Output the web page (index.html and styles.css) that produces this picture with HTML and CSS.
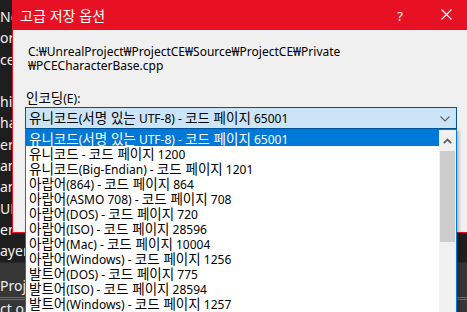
FILE: index.html
```html
<!DOCTYPE html>
<html lang="ko">
<head>
  <meta charset="UTF-8">
  <title>고급 저장 옵션</title>
  <link rel="stylesheet" href="styles.css">
</head>
<body>
<div class="ide">
  <ul class="tree">
    <li>No</li>
    <li>or</li>
    <li>ce</li>
    <li>&nbsp;</li>
    <li>hin</li>
    <li>har</li>
    <li>er</li>
    <li>am</li>
    <li>am</li>
    <li>UD</li>
    <li>en</li>
    <li class="open">ayerA</li>
  </ul>
  <div class="panel">
    <div class="panel-tab">Proje</div>
    <div class="panel-rule"></div>
    <div class="panel-row">ct on</div>
  </div>
</div>

<div class="dialog">
  <div class="titlebar">
    <span class="title">고급 저장 옵션</span>
    <div class="caption-buttons">
      <span class="cap-btn help">?</span>
      <span class="cap-btn close">
        <svg width="11" height="11" viewBox="0 0 11 11"><path d="M0.5 0.5 L10.5 10.5 M10.5 0.5 L0.5 10.5" stroke="#fff" stroke-width="1.1" fill="none"/></svg>
      </span>
    </div>
  </div>
  <div class="dialog-body">
    <p class="path">C:₩UnrealProject₩ProjectCE₩Source₩ProjectCE₩Private<br>₩PCECharacterBase.cpp</p>
    <label class="field-label"><span class="ko">인코딩</span>(E):</label>
    <div class="combo">
      <span><span class="ko">유니코드</span>(<span class="ko">서명 있는</span> UTF-8) - <span class="ko">코드 페이지</span> 65001</span>
      <svg class="chevron" width="10" height="6" viewBox="0 0 10 6"><path d="M0.5 0.5 L5 5 L9.5 0.5" stroke="#606060" stroke-width="1.1" fill="none"/></svg>
    </div>
  </div>
</div>

<div class="dropdown">
  <ul class="options">
    <li class="selected"><span class="ko">유니코드</span>(<span class="ko">서명 있는</span> UTF-8) - <span class="ko">코드 페이지</span> 65001</li>
    <li><span class="ko">유니코드</span> - <span class="ko">코드 페이지</span> 1200</li>
    <li><span class="ko">유니코드</span>(Big-Endian) - <span class="ko">코드 페이지</span> 1201</li>
    <li><span class="ko">아랍어</span>(864) - <span class="ko">코드 페이지</span> 864</li>
    <li><span class="ko">아랍어</span>(ASMO 708) - <span class="ko">코드 페이지</span> 708</li>
    <li><span class="ko">아랍어</span>(DOS) - <span class="ko">코드 페이지</span> 720</li>
    <li><span class="ko">아랍어</span>(ISO) - <span class="ko">코드 페이지</span> 28596</li>
    <li><span class="ko">아랍어</span>(Mac) - <span class="ko">코드 페이지</span> 10004</li>
    <li><span class="ko">아랍어</span>(Windows) - <span class="ko">코드 페이지</span> 1256</li>
    <li><span class="ko">발트어</span>(DOS) - <span class="ko">코드 페이지</span> 775</li>
    <li><span class="ko">발트어</span>(ISO) - <span class="ko">코드 페이지</span> 28594</li>
    <li><span class="ko">발트어</span>(Windows) - <span class="ko">코드 페이지</span> 1257</li>
  </ul>
  <div class="scrollbar">
    <div class="sb-up">
      <svg width="9" height="6" viewBox="0 0 9 6"><path d="M0.8 5.2 L4.5 1.5 L8.2 5.2" stroke="#606060" stroke-width="1.8" fill="none"/></svg>
    </div>
    <div class="sb-thumb"></div>
  </div>
</div>
</body>
</html>
```

FILE: styles.css
```css
:root {
  --title-red: #e81123;
  --dialog-bg: #f0f0f0;
  --ide-bg: #1e1e1e;
  --ide-text: #f1f1f1;
  --accent: #0078d7;
  --combo-bg: #cce4f7;
  --combo-border: #005499;
}

html, body {
  margin: 0;
  padding: 0;
}

body {
  width: 467px;
  height: 312px;
  overflow: hidden;
  position: relative;
  background-color: var(--ide-bg);
  font-family: "Noto Sans", "Noto Sans CJK KR", sans-serif;
}

ul {
  margin: 0;
  padding: 0;
  list-style: none;
}

/* Hangul runs: CJK glyphs are narrower than Malgun Gothic, so bump them */
.ko {
  font-family: "Noto Sans CJK KR", sans-serif;
  font-size: 13.5px;
}

/* IDE behind the dialog */
.ide {
  height: 312px;
  display: flex;
  flex-direction: column;
  color: var(--ide-text);
  font-size: 14px;
}

.tree {
  padding-top: 6px;
  height: 262px;
  box-sizing: border-box;
}

.tree li {
  width: 12px;
  height: 21.3px;
  line-height: 21px;
  overflow: hidden;
  white-space: nowrap;
}

.tree li.open {
  width: 25px;
}

.panel {
  flex: 1;
  background-color: #363636;
  border-top: 1px solid #2a2a2a;
}

.panel-tab,
.panel-row {
  width: 25px;
  overflow: hidden;
  white-space: nowrap;
}

.panel-tab {
  height: 34px;
  line-height: 46px;
}

.panel-rule {
  height: 1px;
  border-top: 1px solid #6a6a6a;
  border-bottom: 1px solid #6a6a6a;
}

.panel-row {
  line-height: 18px;
}

/* dialog window */
.dialog {
  position: absolute;
  left: 12px;
  top: 0;
  width: 458px;
  height: 233px;
  box-sizing: border-box;
  background-color: var(--dialog-bg);
  border: 1px solid var(--title-red);
  border-top: 0;
}

.titlebar {
  height: 30px;
  background-color: var(--title-red);
  display: flex;
  align-items: center;
  justify-content: space-between;
  color: #fff;
}

.title {
  padding-left: 7px;
  font-size: 14px;
  font-family: "Noto Sans CJK KR", sans-serif;
}

.caption-buttons {
  display: flex;
  height: 100%;
}

.cap-btn {
  width: 46px;
  display: flex;
  align-items: center;
  justify-content: center;
}

.help {
  font-size: 13px;
  padding-top: 1px;
}

.close {
  padding-bottom: 2px;
}

.dialog-body {
  padding: 15px 12px 0;
  font-size: 12px;
  color: #000;
}

.path {
  margin: 0 0 0 3px;
  line-height: 14px;
}

.field-label {
  display: block;
  margin: 17px 0 0 1px;
  line-height: 15px;
}

.combo {
  margin-top: 1px;
  height: 22px;
  box-sizing: border-box;
  background-color: var(--combo-bg);
  border: 1px solid var(--combo-border);
  display: flex;
  align-items: center;
  justify-content: space-between;
  padding: 0 6px 0 3px;
  line-height: 15px;
}

.chevron {
  margin-top: 1px;
}

/* open list of the combo */
.dropdown {
  position: absolute;
  left: 25px;
  top: 129px;
  width: 432px;
  height: 190px;
  box-sizing: border-box;
  border: 1px solid var(--accent);
  border-bottom: 0;
  background-color: #fff;
  display: flex;
  font-size: 12px;
  box-shadow: 2px 2px 3px rgba(0, 0, 0, 0.25);
}

.options {
  flex: 1;
}

.options li {
  height: 15px;
  line-height: 15px;
  padding-left: 3px;
  white-space: nowrap;
  color: #000;
}

.options li.selected {
  background-color: var(--accent);
  color: #fff;
  height: 16px;
  line-height: 16px;
}

.scrollbar {
  width: 17px;
  background-color: var(--dialog-bg);
  display: flex;
  flex-direction: column;
}

.sb-up {
  height: 21px;
  display: flex;
  align-items: center;
  justify-content: center;
}

.sb-thumb {
  height: 91px;
  margin: 0 1px;
  background-color: #cdcdcd;
}
```
